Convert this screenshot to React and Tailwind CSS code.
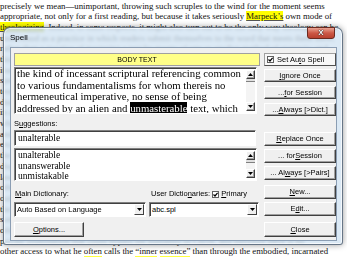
import React from "react";

const lineCls = "whitespace-nowrap h-[10.7px] leading-[10.7px]";

function Arrow({ dir }) {
  return (
    <div className="w-[9px] h-[9px] flex items-center justify-center bg-[#f0f0f0] border border-t-white border-l-white border-r-[#404040] border-b-[#404040] shadow-[inset_-1px_-1px_0_#a0a0a0]">
      <svg width="5" height="3" viewBox="0 0 5 3">
        {dir === "up" ? <path d="M0 3 L2.5 0 L5 3 Z" fill="#000" /> : <path d="M0 0 L5 0 L2.5 3 Z" fill="#000" />}
      </svg>
    </div>
  );
}

function VScroll() {
  return (
    <div className="w-[9px] flex flex-col bg-[#f4f4f4] my-[2px] mr-[1px]">
      <Arrow dir="up" />
      <div className="h-[3px] bg-[#e0e0e0] border-b border-[#808080]" />
      <div className="flex-1" />
      <Arrow dir="down" />
    </div>
  );
}

function Btn({ children, className = "" }) {
  return (
    <div
      className={
        "flex items-center justify-center bg-[#f0f0f0] border border-t-white border-l-white border-r-[#404040] border-b-[#404040] shadow-[inset_-1px_-1px_0_#a0a0a0] text-[7.5px] leading-none text-black whitespace-nowrap " +
        className
      }
    >
      {children}
    </div>
  );
}

function Check() {
  return (
    <div className="w-[7px] h-[7px] bg-white border border-[#606060] flex items-center justify-center">
      <svg width="5" height="5" viewBox="0 0 5 5">
        <path d="M0.5 2.5 L2 4 L4.6 0.8" stroke="#000" strokeWidth="1.2" fill="none" />
      </svg>
    </div>
  );
}

function Sunken({ children, className = "" }) {
  return (
    <div className={"bg-white border border-t-[#808080] border-l-[#808080] border-r-white border-b-white shadow-[inset_1px_1px_0_#404040] " + className}>
      {children}
    </div>
  );
}

function Dropdown({ text, className = "" }) {
  return (
    <Sunken className={"h-[15px] flex items-stretch " + className}>
      <div className="flex-1 pl-[2px] flex items-center text-[7.5px] text-black">{text}</div>
      <div className="w-[10px] my-[1px] mr-[1px] flex items-center justify-center bg-[#f0f0f0] border border-t-white border-l-white border-r-[#404040] border-b-[#404040]">
        <svg width="5" height="3" viewBox="0 0 5 3">
          <path d="M0 0 L5 0 L2.5 3 Z" fill="#000" />
        </svg>
      </div>
    </Sunken>
  );
}

function Dialog() {
  return (
    <div className="absolute left-[3px] top-[27px] w-[340px] h-[218px] flex flex-col rounded-t-[7px] rounded-b-[3px] border border-[#4a5a6c]/80 bg-[#d2e3f3]/80 backdrop-blur-[1.5px] shadow-[0_0_6px_rgba(0,0,0,0.4),inset_0_0_0_1px_rgba(255,255,255,0.7)] font-['Liberation_Sans',Arial,sans-serif]">
      <div className="h-[19px] flex items-start justify-between pl-[6px] pr-[7px]">
        <div className="mt-[6px] text-[8px] leading-none text-black">Spell</div>
        <div className="-mt-[1px] w-[28px] h-[12px] rounded-b-[3px] border border-[#6a2a20] bg-gradient-to-b from-[#e8a393] via-[#cc5846] to-[#b8402e] flex items-center justify-center">
          <span className="text-[8px] font-bold leading-none text-white [text-shadow:0_0_1px_#000,0_0_1px_#000]">X</span>
        </div>
      </div>
      <div className="ml-[6px] mr-[5px] h-[194px] bg-[#f0f0f0] border border-[#8a9db3] flex pl-[3px] gap-[4px]">
        {/* left column */}
        <div className="w-[246px] flex flex-col">
          <div className="mt-[5px] h-[13px] bg-[#ffff88] border border-[#a0a0a0] flex items-center justify-center text-[7px] leading-none text-black">
            BODY TEXT
          </div>
          <Sunken className="mt-[1px] h-[47px] w-[243px] flex overflow-hidden">
            <div className="flex-1 overflow-hidden pl-[2px] font-['Liberation_Serif',serif] text-[10.75px] leading-[11.5px] text-black">
              <div className="whitespace-nowrap">the kind of incessant scriptural referencing common</div>
              <div className="whitespace-nowrap">to various fundamentalisms for whom thereis no</div>
              <div className="whitespace-nowrap">hermeneutical imperative, no sense of being</div>
              <div className="whitespace-nowrap">
                addressed by an alien and <span className="bg-black text-white">unmasterable</span> text, which
              </div>
              <div className="whitespace-nowrap">stands over against us, which it cannot</div>
            </div>
            <VScroll />
          </Sunken>
          <div className="mt-[5px] h-[10px] leading-[10px] text-[7.5px] text-black">
            S<u>u</u>ggestions:
          </div>
          <Sunken className="mt-[1px] h-[16px] w-[242px] flex items-center pl-[3px] font-['Liberation_Serif',serif] text-[9.5px] text-black">
            unalterable
          </Sunken>
          <Sunken className="mt-[2px] h-[33px] w-[243px] flex overflow-hidden">
            <div className="flex-1 pl-[3px] pt-[1px] font-['Liberation_Serif',serif] text-[9.5px] leading-[10.5px] text-black">
              <div>unalterable</div>
              <div>unanswerable</div>
              <div>unmistakable</div>
            </div>
            <VScroll />
          </Sunken>
          <div className="mt-[6px] h-[14px] flex items-center text-[7.5px] text-black">
            <div className="w-[137px] pl-[1px]">
              <u>M</u>ain Dictionary:
            </div>
            <div className="flex items-center gap-[2px]">
              <span>
                User Dictio<u>n</u>aries:
              </span>
              <Check />
              <span>
                <u>P</u>rimary
              </span>
            </div>
          </div>
          <div className="mt-[1px] flex gap-[3px]">
            <Dropdown text="Auto Based on Language" className="w-[132px]" />
            <Dropdown text="abc.spl" className="w-[110px]" />
          </div>
          <Btn className="mt-[5px] h-[15px] w-[70px]">
            <u>O</u>ptions...
          </Btn>
        </div>
        {/* right column */}
        <div className="w-[72px] flex flex-col">
          <div className="mt-[5px] h-[13px] flex items-center gap-[3px] pl-[2px] bg-[#f8f8f8] border border-t-[#a0a0a0] border-l-[#a0a0a0] border-r-[#505050] border-b-[#505050] text-[7.5px] leading-none text-black">
            <Check />
            <span>
              Set Au<u>t</u>o Spell
            </span>
          </div>
          <Btn className="mt-[3px] h-[13px]">
            <u>I</u>gnore Once
          </Btn>
          <Btn className="mt-[4px] h-[13px]">
            ... <u>f</u>or Session
          </Btn>
          <Btn className="mt-[4px] h-[13px]">
            ... <u>A</u>lways [&gt;Dict.]
          </Btn>
          <Btn className="mt-[16px] h-[14px]">
            <u>R</u>eplace Once
          </Btn>
          <Btn className="mt-[3px] h-[14px]">
            ... for <u>S</u>ession
          </Btn>
          <Btn className="mt-[3px] h-[14px]">
            ... Al<u>w</u>ays [&gt;Pairs]
          </Btn>
          <Btn className="mt-[5px] h-[14px]">
            <u>N</u>ew...
          </Btn>
          <Btn className="mt-[3px] h-[14px]">
            E<u>d</u>it...
          </Btn>
          <Btn className="mt-[6px] h-[15px]">
            <u>C</u>lose
          </Btn>
        </div>
      </div>
    </div>
  );
}

const filler = [
  "understood as a practice in which readers submit themselves to the word that meets them there,",
  "rather than a practice of mastering a text by means of one or another method of exegesis; and",
  "this is not merely a matter of hermeneutical preference but of the very shape of discipleship",
  "itself. For Marpeck, as we shall see, the Scripture is not to be read apart from the Spirit who",
  "speaks through it, nor apart from the gathered community in which that speaking is heard and",
  "tested. To read in this way is already to be engaged in theology, and that is precisely why the",
  "distinction between a first reading and a second, more critical, reading cannot be maintained",
  "in any strict sense. What is at stake is the question of how we come to know God at all, and",
  "whether such knowledge is available apart from the humanity of Christ. Marpeck insists, again",
  "and again, that there is no way to the Father except through the Son, and no way to the Son",
  "except through his humanity, which is to say, through the outward signs and ceremonies that",
  "the Spirit uses to draw us inward. This is why he resists both the spiritualists, who would",
  "dispense with the outward altogether, and the literalists, who would make the letter into a",
  "law; both, in his view, fail to reckon with the incarnation. And it is also why he can find no",
  "other way to speak of the knowledge of God than by speaking of Christ himself, in whom the",
  "outward and the inward are joined together without confusion and without separation, so that",
  "the believer is never left to his own devices in seeking God, but is always given",
  "something to hold on to, something to see and hear and touch. For Marpeck there is no",
  "other way, no secret path, no hidden knowledge available to the spiritual elite, no",
  "private illumination that could bypass the humanity of Christ, and therefore there is no",
];

export default function App() {
  return (
    <div className="relative w-[347px] h-[257px] overflow-hidden bg-white font-['Liberation_Serif',serif] text-[8.8px] text-[#111]">
      <div className="pt-[0.5px]">
        <div className={lineCls}>precisely we mean—unimportant, throwing such scruples to the wind for the moment seems</div>
        <div className={lineCls}>
          appropriate, not only for a first reading, but because it takes seriously{" "}
          <span className="bg-[#ffff00] underline decoration-[#555]">Marpeck’s</span> own mode of
        </div>
        <div className={lineCls}>
          <span className="bg-[#ffff00] underline decoration-[#555]">theologizing</span>. Indeed, in some respects, it might also turn out to be the only way theology can be
        </div>
        {filler.map((t, i) => (
          <div key={i} className={lineCls}>
            {t}
          </div>
        ))}
        <div className={lineCls}>
          other access to what he <span className="border-b-[3px] border-[#ffff40]">often</span> calls the{" "}
          <span className="border-b-[3px] border-[#ffff40]">“inner</span>{" "}
          <span className="border-b-[3px] border-[#ffff40]">essence”</span> than through the embodied, incarnated
        </div>
      </div>
      <Dialog />
    </div>
  );
}
